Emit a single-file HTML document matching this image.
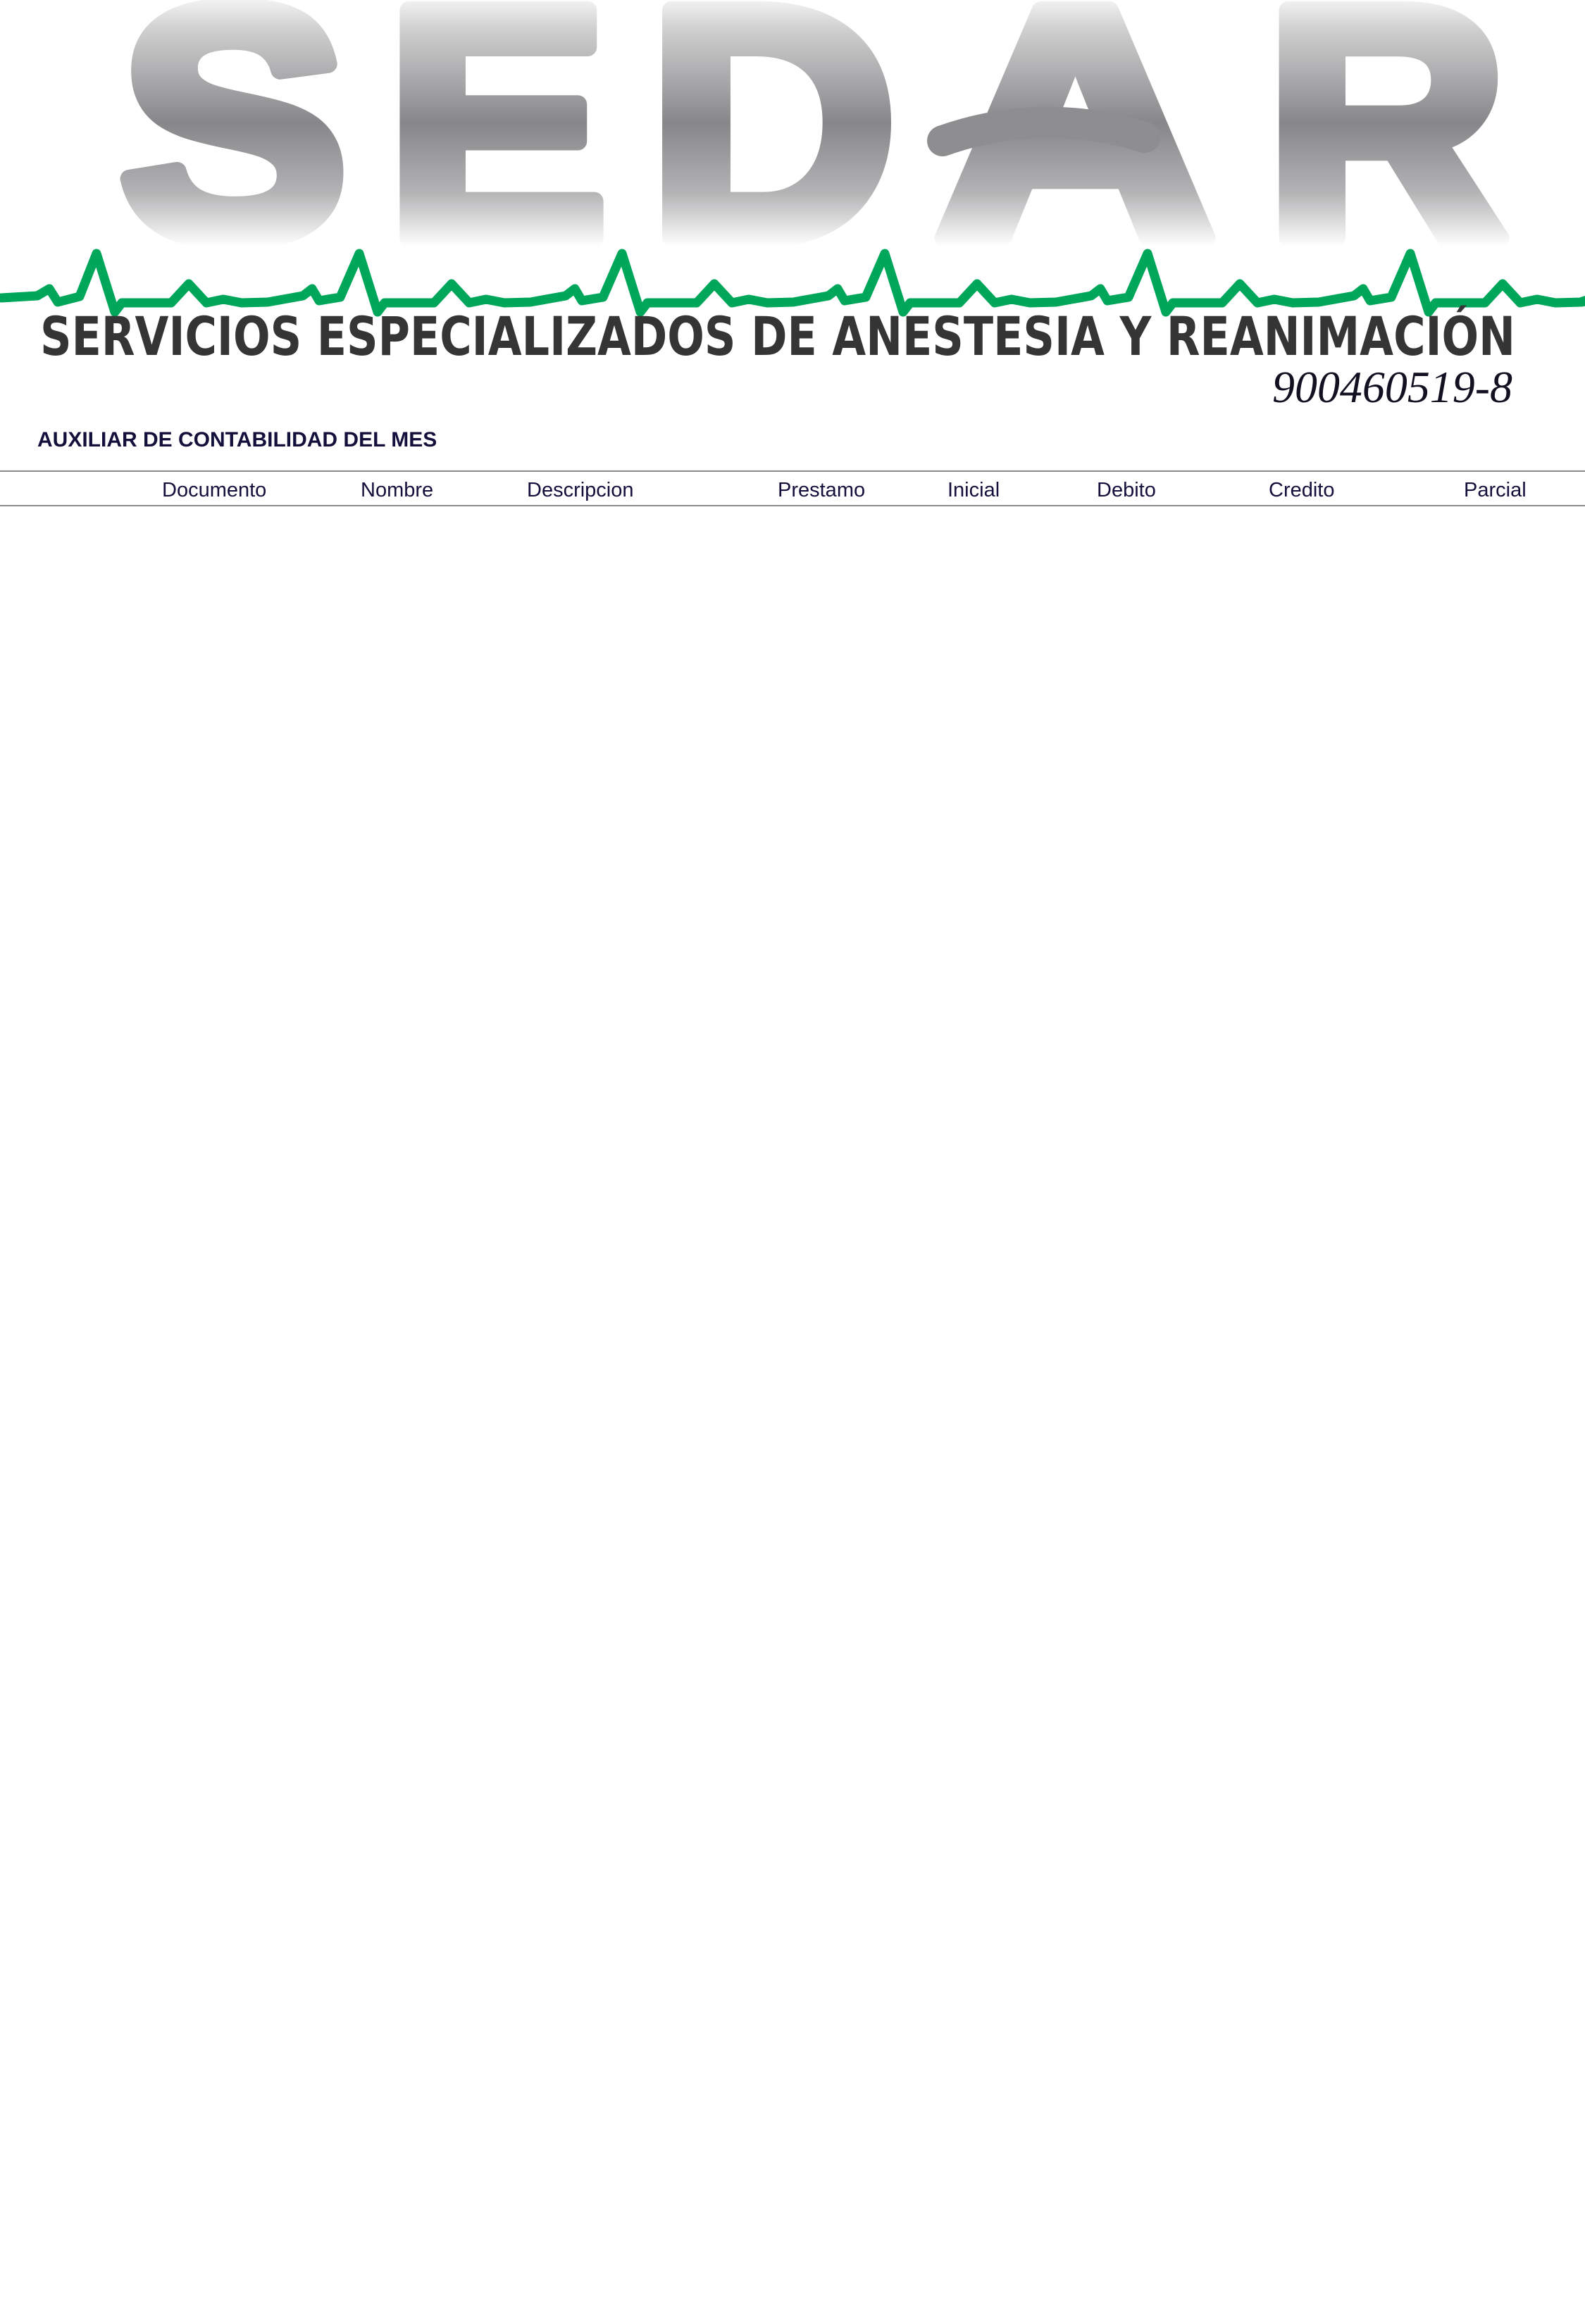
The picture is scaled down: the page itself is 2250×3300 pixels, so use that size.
<!DOCTYPE html>
<html><head><meta charset="utf-8"><style>
html,body{margin:0;padding:0;background:#fff;}
body{width:2250px;height:3300px;position:relative;overflow:hidden;font-family:"Liberation Sans",Arial,sans-serif;}
.t{position:absolute;color:#14103c;font-size:29px;line-height:1;white-space:nowrap;}
.hl{position:absolute;left:0;width:2250px;height:2px;background:#8a8a8a;}
</style></head><body>
<svg width="2250" height="600" style="position:absolute;left:0;top:0" xmlns="http://www.w3.org/2000/svg">
<defs>
<linearGradient id="g" x1="0" y1="0" x2="0" y2="350" gradientUnits="userSpaceOnUse">
<stop offset="0" stop-color="#f2f2f2"/>
<stop offset="0.12" stop-color="#cfcfd0"/>
<stop offset="0.5" stop-color="#87878a"/>
<stop offset="0.78" stop-color="#b3b3b5"/>
<stop offset="1" stop-color="#ffffff"/>
</linearGradient>
</defs>
<g font-family="Liberation Sans, Arial, sans-serif" font-weight="bold" font-size="470" fill="url(#g)" stroke="url(#g)" stroke-width="26" stroke-linejoin="round">
<text x="170" y="338" textLength="323" lengthAdjust="spacingAndGlyphs">S</text>
<text x="549" y="338" textLength="313" lengthAdjust="spacingAndGlyphs">E</text>
<text x="921" y="338" textLength="351" lengthAdjust="spacingAndGlyphs">D</text>
<text x="1328" y="338" textLength="397" lengthAdjust="spacingAndGlyphs">A</text>
<text x="1797" y="338" textLength="342" lengthAdjust="spacingAndGlyphs">R</text>
</g>
<path d="M1338 200 Q1480 150 1625 195" fill="none" stroke="#8e8e90" stroke-width="44" stroke-linecap="round"/>
<path fill="none" stroke="#00a65a" stroke-width="13" stroke-linejoin="round" stroke-linecap="round"
d="M2 423 L53 420 L70 410 L82 429 L113 421 L137 360
l26 83 l10 -13 l70 0 l25 -27 l25 27 l24 -5 l26 5 l37 -1 l50 -9 l13 -10 l10 17 l30 -5 l27 -62
l26 83 l10 -13 l70 0 l25 -27 l25 27 l24 -5 l26 5 l37 -1 l50 -9 l13 -10 l10 17 l30 -5 l27 -62
l26 83 l10 -13 l70 0 l25 -27 l25 27 l24 -5 l26 5 l37 -1 l50 -9 l13 -10 l10 17 l30 -5 l27 -62
l26 83 l10 -13 l70 0 l25 -27 l25 27 l24 -5 l26 5 l37 -1 l50 -9 l13 -10 l10 17 l30 -5 l27 -62
l26 83 l10 -13 l70 0 l25 -27 l25 27 l24 -5 l26 5 l37 -1 l50 -9 l13 -10 l10 17 l30 -5 l27 -62
l26 83 l10 -13 l70 0 l25 -27 l25 27 l24 -5 l26 5 l37 -1 l50 -9 l10 -8 L2246 428"/>
<text x="57" y="504" font-family="DejaVu Sans, sans-serif" font-weight="bold" font-size="76" fill="#353535" textLength="2094" lengthAdjust="spacingAndGlyphs">SERVICIOS ESPECIALIZADOS DE ANESTESIA Y REANIMACIÓN</text>
<text x="1806" y="571" font-family="Liberation Serif, serif" font-style="italic" font-size="64" fill="#111122" textLength="341" lengthAdjust="spacingAndGlyphs">900460519-8</text>
</svg>
<div class="t" style="left:53px;top:610px;font-size:30px;font-weight:bold;">AUXILIAR DE CONTABILIDAD DEL MES</div>
<div class="hl" style="top:668px"></div>
<div class="hl" style="top:717px"></div>
<div class="t" style="left:230px;top:682px">Documento</div>
<div class="t" style="left:512px;top:682px">Nombre</div>
<div class="t" style="left:748px;top:682px">Descripcion</div>
<div class="t" style="left:1104px;top:682px">Prestamo</div>
<div class="t" style="left:1345px;top:682px">Inicial</div>
<div class="t" style="left:1557px;top:682px">Debito</div>
<div class="t" style="left:1801px;top:682px">Credito</div>
<div class="t" style="left:2078px;top:682px">Parcial</div>
</body></html>
